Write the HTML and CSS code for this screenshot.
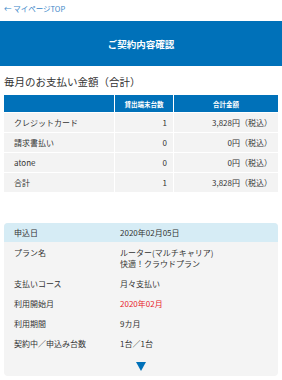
FILE: index.html
```html
<!DOCTYPE html>
<html lang="ja">
<head>
    <meta charset="UTF-8">
    <title>ご契約内容確認</title>
    <link rel="stylesheet" href="styles.css">
</head>
<body>
    <div class="toplink"><a href="#">← マイページTOP</a></div>
    <div class="pagehead">ご契約内容確認</div>

    <h2 class="sec-title">毎月のお支払い金額（合計）</h2>
    <table class="pay">
        <thead>
            <tr><th></th><th>貸出端末台数</th><th>合計金額</th></tr>
        </thead>
        <tbody>
            <tr><td>クレジットカード</td><td class="num">1</td><td class="num">3,828円（税込）</td></tr>
            <tr><td>請求書払い</td><td class="num">0</td><td class="num">0円（税込）</td></tr>
            <tr><td>atone</td><td class="num">0</td><td class="num">0円（税込）</td></tr>
            <tr><td>合計</td><td class="num">1</td><td class="num">3,828円（税込）</td></tr>
        </tbody>
    </table>

    <div class="contract">
        <div class="row first"><span class="lbl">申込日</span><span class="val">2020年02月05日</span></div>
        <div class="row"><span class="lbl">プラン名</span><span class="val">ルーター(マルチキャリア)<br>快適！クラウドプラン</span></div>
        <div class="row"><span class="lbl">支払いコース</span><span class="val">月々支払い</span></div>
        <div class="row"><span class="lbl">利用開始月</span><span class="val red">2020年02月</span></div>
        <div class="row"><span class="lbl">利用期間</span><span class="val">9カ月</span></div>
        <div class="row"><span class="lbl">契約中／申込み台数</span><span class="val">1台／1台</span></div>
        <div class="more"><span class="tri"></span></div>
    </div>
</body>
</html>
```

FILE: styles.css
```css
body { margin: 0; font-family: "Noto Sans CJK JP", "Noto Sans", sans-serif; color: #333; background: #fff; }
.toplink { height: 21px; padding-left: 4px; font-size: 7.5px; line-height: 17px; }
.toplink a { color: #3a86c8; text-decoration: none; }
.pagehead { height: 45px; background: #0071b9; color: #fff; font-size: 9.5px; font-weight: bold; text-align: center; line-height: 46px; }
.sec-title { margin: 0; padding: 8px 4px 0; height: 21px; font-size: 10.5px; font-weight: normal; line-height: 15px; color: #333; }
.pay { margin: 0 4px; width: 274px; border-collapse: collapse; font-size: 8px; }
.pay th { background: #0071b9; color: #fff; font-size: 6.5px; font-weight: bold; height: 17px; padding: 0; border-left: 1px solid #fff; }
.pay th:first-child { width: 110px; border-left: none; }
.pay th:nth-child(2) { width: 58px; }
.pay td { background: #f3f3f3; height: 19px; padding: 0 0 0 10px; border-top: 1px solid #fff; border-left: 1px solid #fff; }
.pay td:first-child { border-left: none; }
.pay td.num { text-align: right; padding: 0 6px 0 0; }
.contract { margin: 31px 4px 0; background: #f4f4f4; border-radius: 4px; font-size: 8px; padding-bottom: 5px; }
.row { display: flex; padding: 5px 0 5px 10px; line-height: 11px; }
.row.first { background: #d6ecf5; border-radius: 4px 4px 0 0; padding: 4px 0 4px 10px; }
.row + .row { padding-top: 5px; padding-bottom: 4px; }
.lbl { width: 106px; flex-shrink: 0; }
.red { color: #e8232b; }
.more { display: flex; justify-content: center; padding-top: 9px; }
.tri { width: 0; height: 0; border-left: 5.5px solid transparent; border-right: 5.5px solid transparent; border-top: 9px solid #0071b9; }
```
